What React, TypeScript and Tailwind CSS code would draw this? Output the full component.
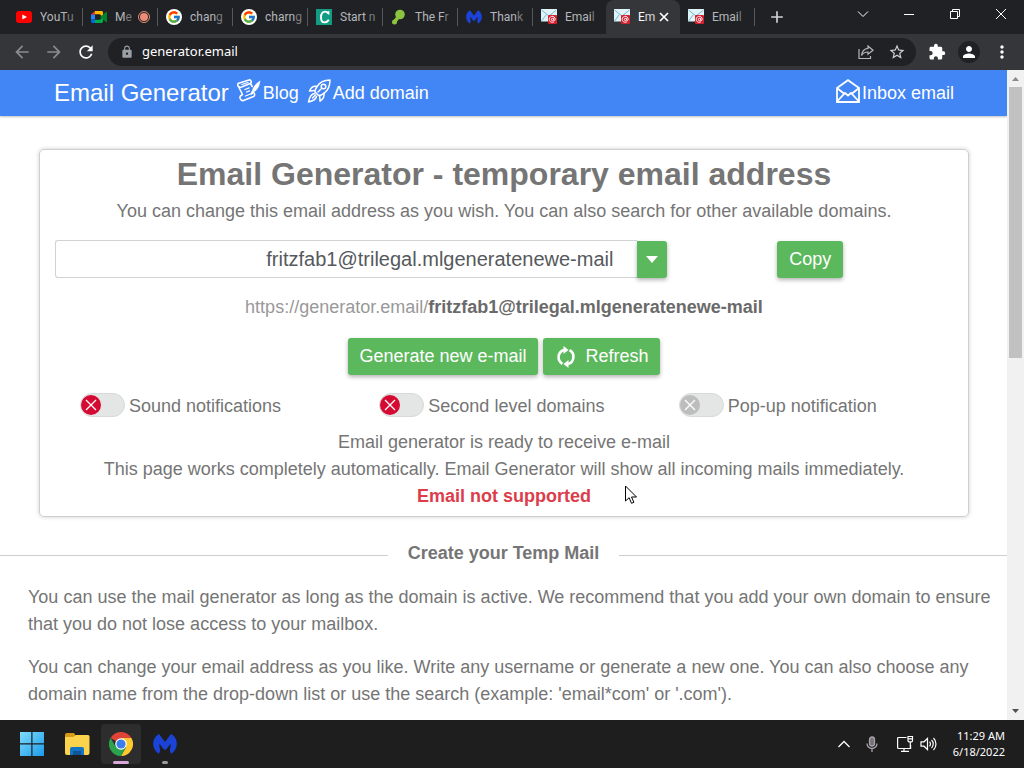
import React from 'react';
import { FcGoogle } from 'react-icons/fc';
import { MdLock, MdRefresh, MdExtension, MdPerson, MdMoreVert, MdArrowBack, MdArrowForward, MdStarBorder, MdAdd } from 'react-icons/md';

const YoutubeIcon = () => (
  <svg viewBox="0 0 16 16" className="size-4 shrink-0">
    <rect x="0" y="2" width="16" height="12" rx="3" fill="#f00" />
    <path d="M6.3 5.4v5.2L11 8z" fill="#fff" />
  </svg>
);

const MeetIcon = () => (
  <svg viewBox="0 0 16 16" className="size-4 shrink-0">
    <path d="M0 5.5h4v5H0z" fill="#2684fc" />
    <path d="M0 10.5h4V14H1.4A1.4 1.4 0 0 1 0 12.6z" fill="#0066da" />
    <path d="M4 2v3.5H0z" fill="#e94235" />
    <path d="M4 2h6.6A1.4 1.4 0 0 1 12 3.4V8L9 5.5H4z" fill="#ffba00" />
    <path d="M4 10.5h5L12 8v4.600a1.400 1.400 0 0 1-1.400 1.400H4z" fill="#00ac47" />
    <path d="M9 8l6-5c.5-.4 1 0 1 .5v9c0 .5-.5.9-1 .5z" fill="#00832d" />
    <path d="M4 5.500h5v5H4z" fill="#202124" />
  </svg>
);

const CIcon = () => (
  <svg viewBox="0 0 16 16" className="size-4 shrink-0">
    <rect width="16" height="16" fill="#129c83" />
    <path d="M12.300 4.800C11.700 3.100 10.600 2.600 9.200 2.600 6.500 2.600 5 5 5 8.400c0 3.200 1.300 5 3.700 5 1.900 0 3.100-.9 4.100-2.600" fill="none" stroke="#fff" strokeWidth="1.900" />
    <path d="M13.300 1.800v4.400L10.500 3.500z" fill="#fff" />
  </svg>
);

const GreenIcon = () => (
  <svg viewBox="0 0 16 16" className="size-4 shrink-0" fill="#8bc53f">
    <circle cx="9" cy="5.500" r="4.800" />
    <circle cx="3.500" cy="13" r="2.500" />
    <path d="M5 8l3 2-3 4-3-2z" />
  </svg>
);

const MalwareIcon = ({ className }: { className: string }) => (
  <svg viewBox="0 0 24 24" className={className} fill="#1c43d8">
    <path d="M6 2l6 8 6-8c3.600 2 5.800 5.500 5.800 9.500 0 4.500-2.200 8-5.300 10.200-1.500-1.400-2-3.200-1.400-5.300.4-1.500.8-2.900.4-4.700L13.600 17c-1 1.100-2.200 1.100-3.200 0l-3.900-5.300c-.4 1.800 0 3.200.4 4.700.6 2.100.1 3.900-1.400 5.300C2.400 19.500.2 16 .2 11.500.2 7.500 2.400 4 6 2z" />
  </svg>
);

const EmailIcon = () => (
  <svg viewBox="0 0 16 16" className="size-4 shrink-0">
    <rect width="16" height="12.500" fill="#dff3f8" />
    <path d="M.5 1l7.500 6 7.500-6M.5 12l5-6.500M15.500 12l-5-6.500" fill="none" stroke="#79b9d0" />
    <rect x="7" y="6" width="9" height="9" rx="1" fill="#d5202f" />
    <path d="M13 12.700a3 3 0 1 1 1.200-2.300c0 1.500-1.500 1.500-1.500.2V9.200M12.700 10.500a1.200 1.200 0 1 1-2.400 0 1.200 1.200 0 0 1 2.400 0z" fill="none" stroke="#fff" strokeWidth=".9" />
  </svg>
);

const ChromeIcon = () => (
  <svg viewBox="0 0 24 24" className="size-6">
    <path d="M12 12L1.600 6A12 12 0 0 1 22.400 6z" fill="#e04437" />
    <path d="M12 12V6h10.400A12 12 0 0 1 12 24l5.200-9z" fill="#fdc92e" />
    <path d="M6.800 15L1.600 6A12 12 0 0 0 12 24l5.200-9z" fill="#2ba24c" />
    <circle cx="12" cy="12" r="5.800" fill="#fff" />
    <circle cx="12" cy="12" r="4.600" fill="#3b7de9" />
  </svg>
);

const BlogIcon = () => (
  <svg viewBox="0 0 24 24" className="mb-1 size-6" fill="none" stroke="currentColor" strokeWidth="1.600" strokeLinejoin="round" strokeLinecap="round">
    <path d="M1 4.500L12 1c2-.5 3.200 2.600 1.200 3.500L4.500 8C1.800 9 0 6.500 1 4.500zM1.500 7.500L5.500 15.500 3.500 17M13.500 4.500l1.700 3M3.500 17c-1.500 1.500.5 5.500 3 4.500l10-4c1.800-1 1.200-3 .2-4" />
    <path d="M5 5.500l6-2M8 10.500l4-1.700M9.500 13l3-1.200M8.500 17l5-2" strokeWidth="1.300" />
    <path d="M23.300 1.500c-4 2.500-7.300 6-8.300 10.500l1.500 1.300C20.500 11.500 23 6.500 23.300 1.500z" fill="currentColor" stroke="none" />
    <path d="M15.300 12.500l-1 2.500 2-1.500" />
  </svg>
);

const RocketIcon = () => (
  <svg viewBox="0 0 24 24" className="mb-1 size-6" fill="none" stroke="currentColor" strokeWidth="1.500" strokeLinejoin="round" strokeLinecap="round">
    <path d="M23 1C17 1 12.500 3.500 10 7.500c-1.300 2-2 4-2 5.500l3.500 3.500c2 0 4-1 5.700-2.400C21 11.500 23 7 23 1z" />
    <circle cx="16.500" cy="7.500" r="2.300" />
    <path d="M10 7.500C6.500 6.700 4 8.500 2.500 12L8 11.500M17 14.200c.7 3.500-1 6-4 8l-.3-5.700M7.500 14.500c-3 .3-5 3.500-6 8.500 4.500-1 7.500-3 8-5.500M5.500 19l3-3" />
    <path d="M11 13l3-3" />
  </svg>
);

const InboxIcon = () => (
  <svg viewBox="0 0 24 24" className="mb-1 size-6" fill="none" stroke="currentColor" strokeWidth="1.800">
    <path d="M1 9L12 1.200 23 9v14H1zM1 9l7.500 6M23 9l-7.500 6" />
    <path d="M1 22.500l8-8.500 3 2.500 3-2.500 8 8.500" />
  </svg>
);

const tabs = [
  { title: 'YouTu', icon: <YoutubeIcon /> },
  { title: 'Me', icon: <MeetIcon />, recording: true },
  { title: 'chang', icon: <FcGoogle className="size-4 shrink-0 rounded-full bg-white p-px" /> },
  { title: 'charng', icon: <FcGoogle className="size-4 shrink-0 rounded-full bg-white p-px" /> },
  { title: 'Start n', icon: <CIcon /> },
  { title: 'The Fr', icon: <GreenIcon /> },
  { title: 'Thank', icon: <MalwareIcon className="size-4 shrink-0" /> },
  { title: 'Email', icon: <EmailIcon />, beforeActive: true },
  { title: 'Em', icon: <EmailIcon />, active: true },
  { title: 'Email', icon: <EmailIcon /> },
];

const tabClass = (tab: { active?: boolean; beforeActive?: boolean }) => {
  if (tab.active) return 'flex w-[74px] items-center rounded-t-lg bg-[#35363a] pr-2 pl-2 text-white';
  if (tab.beforeActive) return 'flex w-[73px] items-center pl-2 text-[#b4b7bb]';
  return 'flex w-[75px] items-center border-r-0 pl-2 text-[#b4b7bb]';
};

const TabStrip = () => (
  <div className="flex h-[34px] shrink-0 bg-[#202124] pl-2">
    {tabs.map((tab, i) => (
      <div key={i} className={tabClass(tab)}>
        {tab.icon}
        <span className="ml-2 font-[Roboto,sans-serif] text-xs whitespace-nowrap">
          {tab.title.slice(0, -1)}
          <span className={tab.active ? 'opacity-80' : 'opacity-60'}>{tab.title.slice(-1)}</span>
        </span>
        {tab.recording && (
          <span className="ml-1.5 flex size-3 shrink-0 items-center justify-center rounded-full border border-[#e88e78]">
            <span className="size-2 rounded-full bg-[#e88e78]" />
          </span>
        )}
        {tab.active && (
          <button aria-label="Close tab" className="ml-auto flex size-4 items-center justify-center">
            <svg viewBox="0 0 10 10" className="size-2.5" stroke="currentColor" strokeWidth="1.700"><path d="M1 1l8 8M9 1L1 9" /></svg>
          </button>
        )}
        {!tab.active && !tab.beforeActive && <span className="ml-auto h-[18px] w-px shrink-0 bg-[#55575b]" />}
      </div>
    ))}
    <button aria-label="New tab" className="ml-3 flex items-center text-[#d0d1d3]"><MdAdd className="size-5" /></button>
    <div className="ml-auto flex h-7 text-white">
      <button aria-label="Search tabs" className="flex w-[46px] items-center justify-center">
        <svg viewBox="0 0 12 12" className="size-3" fill="none" stroke="currentColor"><path d="M1 3.500l5 5 5-5" /></svg>
      </button>
      <button aria-label="Minimize" className="flex w-[46px] items-center justify-center">
        <svg viewBox="0 0 10 10" className="size-2.5" stroke="currentColor"><path d="M0 5.500h10" /></svg>
      </button>
      <button aria-label="Restore" className="flex w-[46px] items-center justify-center">
        <svg viewBox="0 0 10 10" className="size-2.5" fill="none" stroke="currentColor"><path d="M.5 2.500h7v7h-7zM2.500 2.500v-2h7v7h-2" /></svg>
      </button>
      <button aria-label="Close" className="flex w-[46px] items-center justify-center">
        <svg viewBox="0 0 10 10" className="size-2.5" stroke="currentColor"><path d="M0 0l10 10M10 0L0 10" /></svg>
      </button>
    </div>
  </div>
);

const Toolbar = () => (
  <div className="flex h-9 shrink-0 items-center bg-[#35363a] pr-3 pl-3 text-white">
    <button aria-label="Back" className="text-[#8b8c8f]"><MdArrowBack className="size-5" /></button>
    <button aria-label="Forward" className="ml-3 text-[#8b8c8f]"><MdArrowForward className="size-5" /></button>
    <button aria-label="Reload" className="ml-3"><MdRefresh className="size-5" /></button>
    <div className="ml-3 flex h-7 flex-1 items-center rounded-full bg-[#202124] pr-2.5 pl-3">
      <MdLock className="size-3.5 text-[#9aa0a6]" />
      <input aria-label="Address" defaultValue="generator.email" className="ml-2 min-w-0 flex-1 bg-transparent text-[13px] outline-none" />
      <button aria-label="Share" className="text-[#b4b7bb]">
        <svg viewBox="0 0 16 16" className="size-4" fill="none" stroke="currentColor" strokeWidth="1.200">
          <path d="M1 5v9.500h11.500V12M10 2l5 4.200-5 4.100V8C7 8 5 9 3.500 11.500 4 7.500 6 4.800 10 4.400z" />
        </svg>
      </button>
      <button aria-label="Bookmark" className="ml-3.5 text-[#d0d1d3]"><MdStarBorder className="size-[18px]" /></button>
    </div>
    <button aria-label="Extensions" className="ml-3"><MdExtension className="size-[18px]" /></button>
    <button aria-label="Profile" className="ml-3 flex size-[22px] items-center justify-center rounded-full bg-[#202124]"><MdPerson className="size-[18px]" /></button>
    <button aria-label="Menu" className="ml-3"><MdMoreVert className="size-5" /></button>
  </div>
);

const Toggle = ({ label, disabled }: { label: string; disabled?: boolean }) => (
  <label className="flex items-start gap-1 pl-[25px]">
    <span className="relative h-6 w-[45px]">
      <input
        type="checkbox"
        disabled={disabled}
        className="block h-6 w-[45px] appearance-none rounded-full border border-[#d8dada] bg-[#e4e6e6]"
      />
      <svg viewBox="0 0 20 20" className="pointer-events-none absolute top-0.5 left-px size-5">
        <circle cx="10" cy="10" r="10" fill={disabled ? '#bdbdbd' : '#d50a32'} />
        <path d="M5 5l10 10M15 5L5 15" stroke="#fff" strokeWidth="1.300" />
      </svg>
    </span>
    {label}
  </label>
);

const Rule = () => <hr className="mt-1 flex-1 border-[#cfcfcf]" />;

const greenButton = 'h-[37px] rounded-[3px] bg-[#5cb85c] text-white shadow-[0_2px_4px_rgba(0,0,0,0.3)]';

const Page = () => (
  <main className="min-w-0 flex-1 overflow-hidden bg-white font-['Liberation_Sans',Arial,sans-serif] text-lg leading-[27px] text-[#757575]">
    <nav className="flex h-[46px] items-center bg-[#4285f4] pr-[53px] pl-[54px] text-white shadow-[0_1px_2px_rgba(0,0,0,0.25)]">
      <a href="#home" className="text-2xl">Email Generator</a>
      <a href="#blog" className="ml-2 flex items-center gap-0.5"><BlogIcon />Blog</a>
      <a href="#domain" className="ml-2 flex items-center gap-0.5"><RocketIcon />Add domain</a>
      <a href="#inbox" className="ml-auto flex items-center gap-0.5"><InboxIcon />Inbox email</a>
    </nav>

    <section className="mt-[33px] mr-[38px] ml-[39px] rounded-[5px] border border-[#cfcfcf] px-[15px] pt-[5px] pb-1.5 text-center shadow-[0_0_4px_rgba(0,0,0,0.2)]">
      <h1 className="text-[32px] leading-[38px] font-bold">Email Generator - temporary email address</h1>
      <p className="mt-[5px]">You can change this email address as you wish. You can also search for other available domains.</p>

      <div className="mt-[15px] flex items-center">
        <div className="flex w-[68.2%] items-center">
          <input
            aria-label="Email address"
            defaultValue="fritzfab1@trilegal.mlgeneratenewe-mail"
            className="h-[38px] min-w-0 flex-1 rounded-l-[3px] border border-r-0 border-[#cfd3d6] pr-6 text-right text-xl text-[#55595c] outline-none"
          />
          <button aria-label="Choose domain" className="flex h-[37px] w-[30px] items-center justify-center rounded-r-[3px] bg-[#5cb85c] shadow-[0_2px_4px_rgba(0,0,0,0.3)]">
            <svg viewBox="0 0 12 7" className="h-[7px] w-3" fill="#fff"><path d="M0 0h12L6 7z" /></svg>
          </button>
        </div>
        <div className="flex-1">
          <button className={`${greenButton} px-3`}>Copy</button>
        </div>
      </div>

      <p className="mt-4 text-[#999]">
        https://generator.email/<b className="text-[#6a6a6a]">fritzfab1@trilegal.mlgeneratenewe-mail</b>
      </p>

      <div className="mt-[17px] flex justify-center gap-[5px]">
        <button className={`${greenButton} px-[11px]`}>Generate new e-mail</button>
        <button className={`${greenButton} flex items-center gap-2 px-[11px]`}>
          <svg viewBox="0 0 24 24" className="size-6" fill="none" stroke="currentColor" strokeWidth="2.600">
            <path d="M8.500 18.800A7.500 7.500 0 0 1 10 5M15.500 5.200A7.500 7.500 0 0 1 14 19" />
            <path d="M9.500 1l5 4-5 4zM14.500 15l-5 4 5 4z" fill="currentColor" stroke="none" />
          </svg>
          Refresh
        </button>
      </div>

      <div className="mt-[18px] grid grid-cols-3">
        <Toggle label="Sound notifications" />
        <Toggle label="Second level domains" />
        <Toggle label="Pop-up notification" disabled />
      </div>

      <p className="mt-[9px]">Email generator is ready to receive e-mail</p>
      <p>This page works completely automatically. Email Generator will show all incoming mails immediately.</p>
      <p className="font-bold text-[#dc3d4b]">Email not supported</p>
    </section>

    <div className="mt-[23px] flex items-center gap-5">
      <Rule />
      <h2 className="font-bold">Create your Temp Mail</h2>
      <Rule />
    </div>
    <div className="mt-[17px] flex flex-col gap-4 pr-3 pl-7">
      <p>You can use the mail generator as long as the domain is active. We recommend that you add your own domain to ensure that you do not lose access to your mailbox.</p>
      <p>You can change your email address as you like. Write any username or generate a new one. You can also choose any domain name from the drop-down list or use the search (example: 'email*com' or '.com').</p>
    </div>
  </main>
);

const Scrollbar = () => (
  <div className="flex w-[17px] shrink-0 flex-col items-center bg-[#f1f1f1]">
    <svg viewBox="0 0 17 17" className="size-[17px] shrink-0" fill="#8a8a8a"><path d="M5 11h7L8.500 7z" /></svg>
    <div className="h-[271px] w-[13px] bg-[#c1c1c1]" />
    <svg viewBox="0 0 17 17" className="mt-auto size-[17px] shrink-0" fill="#505050"><path d="M5 6h7l-3.500 4z" /></svg>
  </div>
);

const Taskbar = () => (
  <footer className="flex h-12 shrink-0 items-center bg-[#1e1e1f] pr-[19px] pl-5 text-white">
    <button aria-label="Start">
      <svg viewBox="0 0 24 24" className="size-6">
        <defs>
          <linearGradient id="win" x2="1" y2="1"><stop stopColor="#7fdcfb" /><stop offset="1" stopColor="#1a9bea" /></linearGradient>
        </defs>
        <path d="M0 0h11.300v11.300H0zM12.500 0H24v11.300H12.500zM0 12.500h11.300V24H0zM12.500 12.500H24V24H12.500z" fill="url(#win)" />
      </svg>
    </button>
    <button aria-label="File Explorer" className="ml-5">
      <svg viewBox="0 0 26 24" className="h-6 w-[26px]">
        <path d="M1 3a2 2 0 0 1 2-2h7l2 3v6H1z" fill="#d79b16" />
        <path d="M1 5h8l3-2h12a1.500 1.500 0 0 1 1.500 1.500V21a2 2 0 0 1-2 2H3a2 2 0 0 1-2-2z" fill="#fcd34c" />
        <path d="M6 23v-6a2 2 0 0 1 2-2h10a2 2 0 0 1 2 2v6z" fill="#1574c4" />
        <path d="M9 19h8v4H9z" fill="#0d5597" />
      </svg>
    </button>
    <button aria-label="Chrome" className="relative ml-[11px] flex size-10 items-center justify-center rounded-[4px] bg-[#2d2d2e]">
      <ChromeIcon />
      <span className="absolute bottom-0 h-[3px] w-4 rounded-full bg-[#d8a7dc]" />
    </button>
    <button aria-label="Malwarebytes" className="relative ml-1 flex size-10 items-center justify-center">
      <MalwareIcon className="size-6" />
      <span className="absolute bottom-0 h-[3px] w-1.5 rounded-full bg-[#9a9a9a]" />
    </button>

    <div className="ml-auto flex items-center">
      <svg viewBox="0 0 12 8" className="h-2 w-3" fill="none" stroke="currentColor" strokeWidth="1.300"><path d="M.5 7L6 1.500 11.500 7" /></svg>
      <svg viewBox="0 0 16 16" className="ml-3.5 size-4" fill="none" stroke="#a7a2a9" strokeWidth="1.300">
        <rect x="5.500" y="1" width="5" height="9" rx="2.500" fill="#777279" />
        <path d="M3 7.500a5 5 0 0 0 10 0M8 12.500V16" />
      </svg>
      <svg viewBox="0 0 18 18" className="ml-4 size-[18px]" fill="none" stroke="currentColor" strokeWidth="1.200">
        <path d="M10.500 2.500H2.600a1 1 0 0 0-1 1v9a1 1 0 0 0 1 1h12V10M5 16.400h8M8 13.500v3M12 1.500h4.500v4.300a1 1 0 0 1-1 1H13a1 1 0 0 1-1-1zM14.300 7v6M12.500 3.800h3.500" />
      </svg>
      <svg viewBox="0 0 18 16" className="ml-1.5 h-4 w-[18px]" fill="none" stroke="currentColor" strokeWidth="1.200">
        <path d="M1 5.800h3L7.500 2.500v11L4 10.200H1zM9.500 5.800a3 3 0 0 1 0 4.400M11.500 4a5.500 5.500 0 0 1 0 8M13.500 2a8.500 8.500 0 0 1 0 12" />
      </svg>
      <div className="ml-[15px] text-right text-[11px] leading-4">
        <div>11:29 AM</div>
        <div>6/18/2022</div>
      </div>
    </div>
  </footer>
);

const App = () => (
  <div className="relative flex h-screen flex-col overflow-hidden font-['Noto_Sans','Open_Sans',sans-serif]">
    <TabStrip />
    <Toolbar />
    <div className="flex min-h-0 flex-1">
      <Page />
      <Scrollbar />
    </div>
    <Taskbar />
    {/* Mouse pointer */}
    <svg viewBox="0 0 12 19" className="pointer-events-none absolute top-[485px] left-[625px] h-[19px] w-3" fill="#fff" stroke="#000">
      <path d="M.5 1v15l3.600-3.300 2.400 5.600 2.400-1-2.400-5.300h5z" />
    </svg>
  </div>
);

export default App;
